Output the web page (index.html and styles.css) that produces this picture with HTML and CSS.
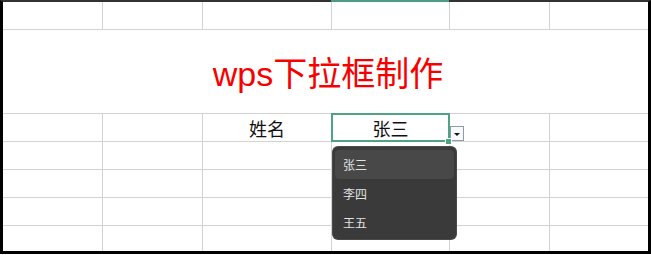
FILE: index.html
```html
<!DOCTYPE html>
<html lang="zh-CN">
<head>
<meta charset="utf-8">
<title>wps下拉框制作</title>
<link rel="stylesheet" href="styles.css">
</head>
<body>
<div class="frame">
  <div class="col-mark"></div>
  <div class="sheet">
    <div class="cell"></div><div class="cell"></div><div class="cell"></div><div class="cell"></div><div class="cell"></div><div class="cell last-col"></div>
    <div class="cell merged"><span class="title">wps下拉框制作</span></div>
    <div class="cell"></div><div class="cell"></div><div class="cell label">姓名</div>
    <div class="cell label selected">张三
      <span class="handle"></span>
      <span class="drop-btn"><span class="tri"></span></span>
      <ul class="menu">
        <li class="item active">张三</li>
        <li class="item">李四</li>
        <li class="item">王五</li>
      </ul>
    </div>
    <div class="cell"></div><div class="cell last-col"></div>
    <div class="cell"></div><div class="cell"></div><div class="cell"></div><div class="cell"></div><div class="cell"></div><div class="cell last-col"></div>
    <div class="cell"></div><div class="cell"></div><div class="cell"></div><div class="cell"></div><div class="cell"></div><div class="cell last-col"></div>
    <div class="cell"></div><div class="cell"></div><div class="cell"></div><div class="cell"></div><div class="cell"></div><div class="cell last-col"></div>
    <div class="cell last-row"></div><div class="cell last-row"></div><div class="cell last-row"></div><div class="cell last-row"></div><div class="cell last-row"></div><div class="cell last-row last-col"></div>
  </div>
</div>
</body>
</html>
```

FILE: styles.css
```css
html, body {
  margin: 0;
  padding: 0;
  background: #ffffff;
}

.frame {
  position: relative;
  width: 651px;
  height: 254px;
  box-sizing: border-box;
  border-left: 3px solid #000000;
  border-right: 3px solid #000000;
  border-top: 2px solid #333333;
  border-bottom: 3px solid #000000;
  font-family: "Liberation Sans", "Noto Sans CJK SC", sans-serif;
}

.col-mark {
  position: absolute;
  top: -2px;
  left: 328px;
  width: 118px;
  height: 2px;
  background: #4a9e80;
}

.sheet {
  display: grid;
  grid-template-columns: 100px 100px 129px 118px 100px 1fr;
  grid-template-rows: 28px 84px 28px 28px 28px 28px 1fr;
  height: 100%;
}

.cell {
  box-sizing: border-box;
  border-right: 1px solid #d2d2d2;
  border-bottom: 1px solid #d2d2d2;
}

.cell.last-col {
  border-right: none;
}

.cell.last-row {
  border-bottom: none;
}

.merged {
  grid-column: 1 / -1;
  border-right: none;
  display: flex;
  align-items: center;
  justify-content: center;
}

.title {
  color: #f70000;
  font-size: 34px;
  padding-left: 5px;
  font-family: "Liberation Sans", "Noto Sans CJK SC", sans-serif;
}

.label {
  display: flex;
  align-items: center;
  justify-content: center;
  font-family: "Noto Sans CJK SC", sans-serif;
  font-size: 18px;
  color: #111111;
  line-height: 1;
}

.selected {
  position: relative;
}

.selected::before {
  content: "";
  position: absolute;
  top: -1px;
  left: -1px;
  right: -1px;
  bottom: -1px;
  border: 2px solid #4fa383;
}

.handle {
  position: absolute;
  right: -3px;
  bottom: -4px;
  width: 5px;
  height: 5px;
  background: #4fa383;
  border: 1px solid #ffffff;
  z-index: 2;
}

.drop-btn {
  position: absolute;
  left: calc(100% + 1px);
  top: 12px;
  width: 14px;
  height: 15px;
  box-sizing: border-box;
  border: 1px solid #8d9cab;
  background: #f7f9fb;
  display: flex;
  align-items: center;
  justify-content: center;
  z-index: 1;
}

.tri {
  width: 0;
  height: 0;
  border-left: 3px solid transparent;
  border-right: 3px solid transparent;
  border-top: 3px solid #111111;
  margin-top: 1px;
}

.menu {
  position: absolute;
  left: 1px;
  top: 33px;
  width: 123px;
  margin: 0;
  padding: 3px 2px 2px;
  box-sizing: border-box;
  list-style: none;
  background: #3a3a3a;
  border-radius: 5px;
  box-shadow: 0 0 0 1px #4a4a4a;
  z-index: 3;
}

.item {
  height: 29px;
  display: flex;
  align-items: center;
  padding-left: 8px;
  font-family: "Noto Sans CJK SC", sans-serif;
  font-size: 12px;
  color: #e2e2e2;
  border-radius: 4px;
}

.item.active {
  background: #484848;
}
```
